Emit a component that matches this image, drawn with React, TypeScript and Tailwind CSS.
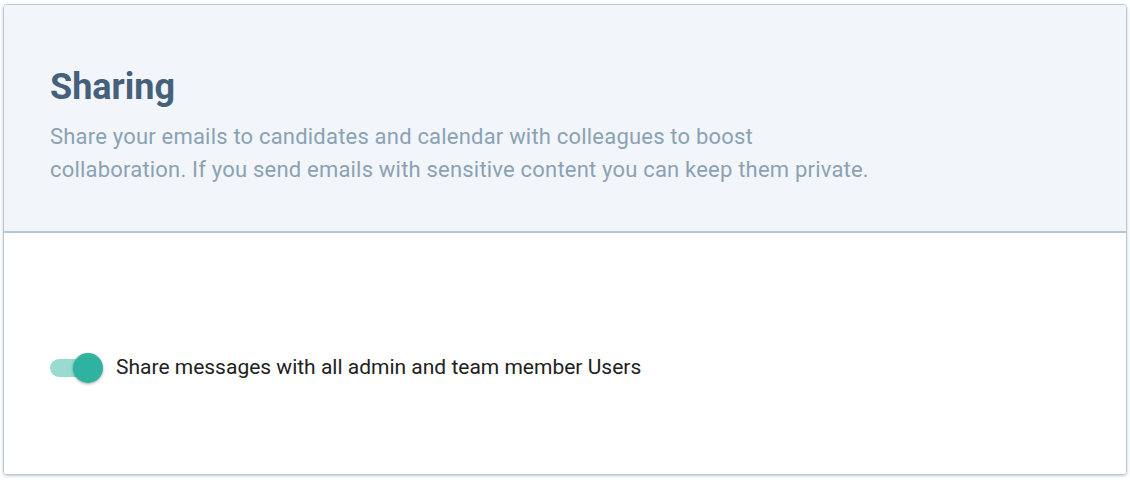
export default function App() {
  return (
    <div className="w-[1130px] h-[480px] bg-white p-[3px] pt-[4px]" style={{ fontFamily: 'Roboto, "Liberation Sans", sans-serif' }}>
      <div className="h-[471px] rounded-[4px] border border-[#b8c9d6] shadow-[0_1px_3px_rgba(120,150,175,0.5)] overflow-hidden flex flex-col">
        <div className="h-[228px] bg-[#f2f6fa] border-b-2 border-[#b5c7d4] pl-[46px] pt-[61px]">
          <h1 className="text-[36px] leading-[42px] font-bold text-[#45607a]">Sharing</h1>
          <p className="mt-[12px] max-w-[840px] text-[22px] tracking-[0.2px] leading-[33px] text-[#8ba1b4]">
            Share your emails to candidates and calendar with colleagues to boost collaboration. If you send emails with sensitive content you can keep them private.
          </p>
        </div>
        <div className="flex-1 bg-white pl-[46px] pt-[119px]">
          <div className="flex items-center">
            <div className="relative w-[54px] h-[32px] flex items-center">
              <div className="w-[50px] h-[18px] rounded-full bg-[#98dbd1]" />
              <div className="absolute left-[23px] top-[1px] w-[30px] h-[30px] rounded-full bg-[#2fb3a0] shadow-[0_1px_3px_rgba(0,0,0,0.35)]" />
            </div>
            <span className="ml-[12px] text-[21px] text-[#212121]">Share messages with all admin and team member Users</span>
          </div>
        </div>
      </div>
    </div>
  );
}
